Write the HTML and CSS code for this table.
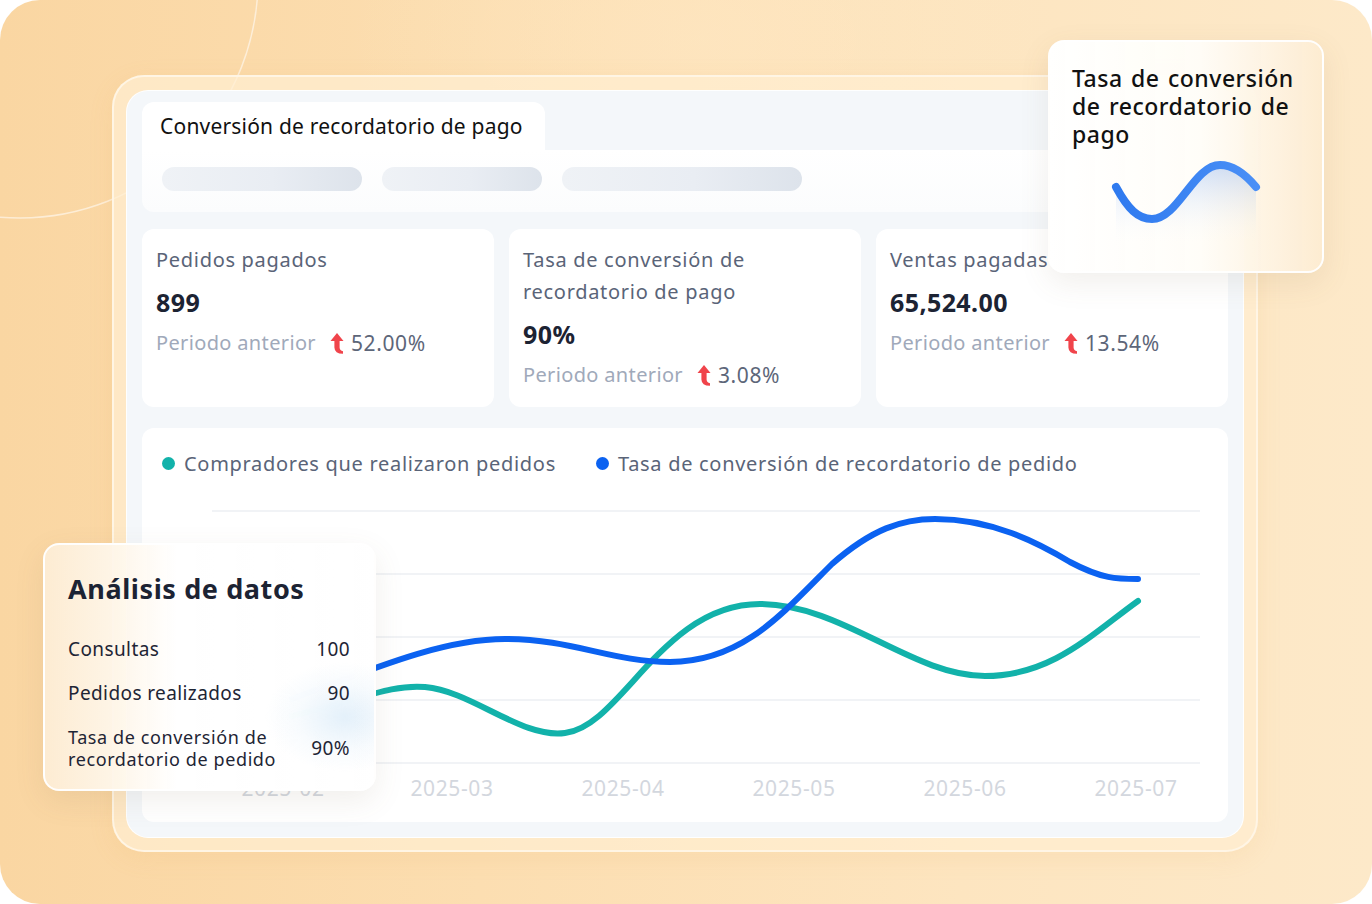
FILE: index.html
```html
<!DOCTYPE html>
<html lang="es">
<head>
<meta charset="utf-8">
<title>Conversión de recordatorio de pago</title>
<link rel="stylesheet" href="styles.css">
</head>
<body>
<div class="stage">
  <svg class="deco" width="600" height="400" viewBox="0 0 600 400">
    <circle cx="20" cy="-20" r="238" fill="none" stroke="#ffffff" stroke-opacity="0.55" stroke-width="1.5"/>
  </svg>

  <div class="frame">
    <div class="panel">
      <div class="header">
        <div class="tab">Conversión de recordatorio de pago</div>
        <div class="header-body">
          <span class="pill pill-a"></span>
          <span class="pill pill-b"></span>
          <span class="pill pill-c"></span>
        </div>
      </div>

      <div class="metrics">
        <div class="metric">
          <div class="m-label">Pedidos pagados</div>
          <div class="m-value">899</div>
          <div class="m-prev">Periodo anterior
            <svg class="up" width="14" height="22" viewBox="0 0 14 22"><path d="M7 1 L13.5 9 L9.6 9 L9.6 15.5 Q9.8 18.6 13 19.2 L13 21.8 Q4.6 21.8 4.4 15.5 L4.4 9 L0.5 9 Z" fill="#f0444b"/></svg>
            <span class="pct">52.00%</span></div>
        </div>
        <div class="metric">
          <div class="m-label">Tasa de conversión de<br>recordatorio de pago</div>
          <div class="m-value">90%</div>
          <div class="m-prev">Periodo anterior
            <svg class="up" width="14" height="22" viewBox="0 0 14 22"><path d="M7 1 L13.5 9 L9.6 9 L9.6 15.5 Q9.8 18.6 13 19.2 L13 21.8 Q4.6 21.8 4.4 15.5 L4.4 9 L0.5 9 Z" fill="#f0444b"/></svg>
            <span class="pct">3.08%</span></div>
        </div>
        <div class="metric">
          <div class="m-label">Ventas pagadas</div>
          <div class="m-value">65,524.00</div>
          <div class="m-prev">Periodo anterior
            <svg class="up" width="14" height="22" viewBox="0 0 14 22"><path d="M7 1 L13.5 9 L9.6 9 L9.6 15.5 Q9.8 18.6 13 19.2 L13 21.8 Q4.6 21.8 4.4 15.5 L4.4 9 L0.5 9 Z" fill="#f0444b"/></svg>
            <span class="pct">13.54%</span></div>
        </div>
      </div>

      <div class="chart-card">
        <div class="legend">
          <span class="lg"><i class="dot dot-teal"></i>Compradores que realizaron pedidos</span>
          <span class="lg"><i class="dot dot-blue"></i>Tasa de conversión de recordatorio de pedido</span>
        </div>
        <svg class="chart" width="1086" height="328" viewBox="0 0 1086 328">
          <g stroke="#eceff3" stroke-width="1.5">
            <line x1="70" y1="17" x2="1058" y2="17"/>
            <line x1="70" y1="80" x2="1058" y2="80"/>
            <line x1="70" y1="143" x2="1058" y2="143"/>
            <line x1="70" y1="206" x2="1058" y2="206"/>
            <line x1="70" y1="269" x2="1058" y2="269"/>
          </g>
          <g class="xl" fill="#d3d7de" font-size="21" text-anchor="middle">
            <text x="141" y="302">2025-02</text>
            <text x="310" y="302">2025-03</text>
            <text x="481" y="302">2025-04</text>
            <text x="652" y="302">2025-05</text>
            <text x="823" y="302">2025-06</text>
            <text x="994" y="302">2025-07</text>
          </g>
          <path d="M150 222 C 220 205, 250 190, 283 193 C 330 197, 380 245, 423 239 C 480 232, 520 110, 618 110 C 700 110, 770 182, 843 182 C 910 182, 950 140, 996 107" fill="none" stroke="#12b2aa" stroke-width="6" stroke-linecap="round"/>
          <path d="M150 205 C 230 175, 300 145, 363 145 C 430 145, 470 168, 528 168 C 600 168, 640 120, 690 70 C 730 35, 760 25, 793 25 C 850 25, 895 48, 928 68 C 960 85, 975 85, 996 85" fill="none" stroke="#0b62f1" stroke-width="6" stroke-linecap="round"/>
        </svg>
      </div>
    </div>
  </div>

  <div class="float-card rate-card">
    <div class="rate-title">Tasa de conversión de recordatorio de pago</div>
    <svg class="wave" width="160" height="92" viewBox="0 0 160 92">
      <defs>
        <linearGradient id="wfill" x1="0" y1="0" x2="0" y2="1">
          <stop offset="0" stop-color="#5b95f5" stop-opacity="0.30"/>
          <stop offset="1" stop-color="#ffffff" stop-opacity="0"/>
        </linearGradient>
        <linearGradient id="wstroke" x1="0" y1="0" x2="1" y2="0">
          <stop offset="0" stop-color="#2f7aef"/>
          <stop offset="1" stop-color="#4a8ff6"/>
        </linearGradient>
      </defs>
      <path d="M8 34 C 20 56, 30 66, 44 66 C 70 66, 86 12, 112 12 C 126 12, 138 22, 148 34 L148 92 L8 92 Z" fill="url(#wfill)"/>
      <path d="M8 34 C 20 56, 30 66, 44 66 C 70 66, 86 12, 112 12 C 126 12, 138 22, 148 34" fill="none" stroke="url(#wstroke)" stroke-width="8" stroke-linecap="round"/>
    </svg>
  </div>

  <div class="float-card analysis-card">
    <div class="an-title">Análisis de datos</div>
    <div class="an-row"><span>Consultas</span><span>100</span></div>
    <div class="an-row"><span>Pedidos realizados</span><span>90</span></div>
    <div class="an-row an-row-2"><span class="an-two">Tasa de conversión de<br>recordatorio de pedido</span><span>90%</span></div>
  </div>
</div>
</body>
</html>
```

FILE: styles.css
```css
* { box-sizing: border-box; }

html, body {
  margin: 0;
  padding: 0;
  background: #ffffff;
}

body {
  font-family: "Noto Sans", "Open Sans", "Liberation Sans", sans-serif;
  color: #1e2535;
}

.stage {
  position: relative;
  width: 1372px;
  height: 904px;
  border-radius: 40px;
  overflow: hidden;
  background:
    radial-gradient(ellipse 500px 260px at 700px 40px, rgba(255, 233, 198, 0.45), rgba(255, 233, 198, 0) 70%),
    linear-gradient(90deg, #fad6a2 0%, #fcdeb1 35%, #fde5c0 70%, #fde9c9 100%);
  padding: 75px 0 0 112px;
}

.deco {
  position: absolute;
  left: 0;
  top: 0;
}

.frame {
  position: relative;
  width: 1146px;
  height: 777px;
  border-radius: 32px;
  border: 2px solid rgba(255, 246, 230, 0.95);
  background: rgba(255, 237, 208, 0.75);
  box-shadow: 0 6px 24px rgba(230, 170, 90, 0.12);
  padding: 13px 12px;
}

.panel {
  width: 1118px;
  height: 748px;
  border-radius: 22px;
  background: #f4f7fa;
  border: 1px solid rgba(255, 255, 255, 0.9);
  padding: 11px 15px 15px 15px;
  display: flex;
  flex-direction: column;
}

/* header */
.header {
  display: flex;
  flex-direction: column;
}

.tab {
  align-self: flex-start;
  width: 403px;
  height: 48px;
  background: #ffffff;
  border-radius: 12px 12px 0 0;
  padding-left: 18px;
  display: flex;
  align-items: center;
  font-size: 21px;
  color: #111111;
  letter-spacing: 0.2px;
}

.header-body {
  background: linear-gradient(180deg, #ffffff 0%, #fbfcfd 100%);
  border-radius: 0 12px 12px 12px;
  height: 62px;
  padding: 17px 0 0 20px;
  display: flex;
  gap: 20px;
}

.pill {
  display: block;
  height: 24px;
  border-radius: 12px;
  background: linear-gradient(90deg, #eff2f6 0%, #e9edf3 55%, #dde3eb 100%);
}
.pill-a { width: 200px; }
.pill-b { width: 160px; }
.pill-c { width: 240px; }

/* metrics */
.metrics {
  margin-top: 17px;
  display: grid;
  grid-template-columns: repeat(3, 1fr);
  gap: 15px;
}

.metric {
  height: 178px;
  background: #ffffff;
  border-radius: 12px;
  padding: 15px 14px 0 14px;
}

.m-label {
  font-size: 20px;
  line-height: 32px;
  color: #5a6478;
  letter-spacing: 0.7px;
}

.m-value {
  margin-top: 6px;
  font-size: 25px;
  line-height: 40px;
  font-weight: 700;
  color: #1c2333;
  letter-spacing: 0.4px;
}

.m-prev {
  margin-top: 5px;
  font-size: 20px;
  line-height: 32px;
  color: #a0a9ba;
  display: flex;
  align-items: center;
  letter-spacing: 0.35px;
}

.up {
  margin: 0 7px 0 14px;
}

.pct {
  color: #5d6679;
  font-size: 21px;
  letter-spacing: 0.6px;
}

/* chart */
.chart-card {
  margin-top: 21px;
  flex: 1;
  background: #ffffff;
  border-radius: 12px;
  display: flex;
  flex-direction: column;
}

.legend {
  height: 66px;
  padding: 5px 0 0 20px;
  display: flex;
  gap: 40px;
  font-size: 20px;
  line-height: 24px;
  color: #5a6478;
  letter-spacing: 0.7px;
}

.lg {
  display: flex;
  align-items: center;
}

.dot {
  display: inline-block;
  width: 13px;
  height: 13px;
  border-radius: 50%;
  margin-right: 9px;
}
.dot-teal { background: #12b2aa; }
.dot-blue { background: #0b62f1; }

.chart {
  display: block;
}

.xl text {
  font-family: "Noto Sans", "Open Sans", sans-serif;
  letter-spacing: 0.6px;
}

/* floating cards */
.float-card {
  position: absolute;
  border-radius: 16px;
  border: 2px solid rgba(255, 255, 255, 0.95);
  box-shadow: 0 10px 30px rgba(120, 100, 70, 0.10);
}

.rate-card {
  left: 1048px;
  top: 40px;
  width: 276px;
  height: 233px;
  background: linear-gradient(90deg, rgba(255, 255, 255, 0.98) 0%, rgba(255, 253, 248, 0.96) 55%, rgba(253, 236, 210, 0.95) 100%);
  padding: 22px 20px 0 22px;
}

.rate-title {
  font-size: 23px;
  line-height: 28px;
  font-weight: 500;
  color: #111111;
  letter-spacing: 0.5px;
  word-spacing: 2px;
}

.wave {
  display: block;
  margin: 5px 0 0 36px;
}

.analysis-card {
  left: 43px;
  top: 543px;
  width: 333px;
  height: 248px;
  background:
    radial-gradient(ellipse 80px 55px at 300px 172px, rgba(205, 228, 246, 0.55), rgba(205, 228, 246, 0.15) 60%, rgba(205, 228, 246, 0) 100%),
    linear-gradient(90deg, rgba(253, 236, 212, 0.97) 0%, rgba(254, 246, 234, 0.97) 22%, rgba(255, 255, 255, 0.98) 40%, #ffffff 100%);
  padding: 24px 24px 0 23px;
}

.an-title {
  font-size: 27px;
  line-height: 40px;
  font-weight: 700;
  color: #1c2333;
  letter-spacing: 0.6px;
  margin-bottom: 18px;
}

.an-row {
  display: flex;
  justify-content: space-between;
  align-items: center;
  font-size: 19px;
  line-height: 24px;
  color: #1e2535;
  height: 44px;
  letter-spacing: 0.4px;
}

.an-row-2 {
  height: 66px;
}

.an-two {
  font-size: 18px;
  line-height: 22px;
  letter-spacing: 0.6px;
}
```
